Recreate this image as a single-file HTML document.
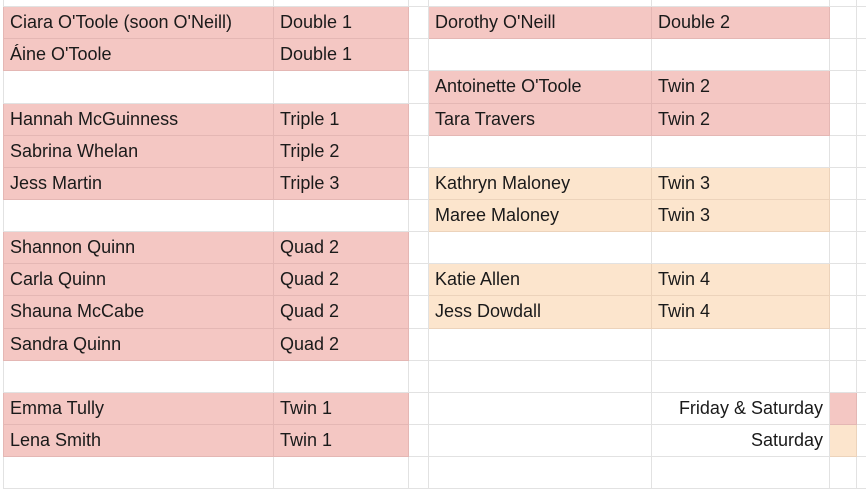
<!DOCTYPE html>
<html><head><meta charset="utf-8"><style>
html,body{margin:0;padding:0;width:866px;height:465px;overflow:hidden;background:#fff}
table{position:absolute;left:3px;top:-26px;width:873px;border-collapse:collapse;table-layout:fixed;font-family:"Liberation Sans",Arial,sans-serif;font-size:18px;color:#1a1a1a}
td{height:31.15px;border:1px solid #e2e2e2;padding:0 0 0 6px;white-space:nowrap;overflow:hidden;vertical-align:middle}
td.p{background:#f4c7c3;border-color:#e4b7b4}
td.o{background:#fce5cd;border-color:#ecd3bb}
td.r{text-align:right;padding:0 6px 0 0}
</style></head><body>
<table>
<colgroup><col style="width:270px"><col style="width:135px"><col style="width:20px"><col style="width:223px"><col style="width:178px"><col style="width:27px"><col style="width:20px"></colgroup>
<tr><td></td><td></td><td></td><td></td><td></td><td></td><td></td></tr>
<tr><td class="p">Ciara O'Toole (soon O'Neill)</td><td class="p">Double 1</td><td></td><td class="p">Dorothy O'Neill</td><td class="p">Double 2</td><td></td><td></td></tr>
<tr><td class="p">Áine O'Toole</td><td class="p">Double 1</td><td></td><td></td><td></td><td></td><td></td></tr>
<tr><td></td><td></td><td></td><td class="p">Antoinette O'Toole</td><td class="p">Twin 2</td><td></td><td></td></tr>
<tr><td class="p">Hannah McGuinness</td><td class="p">Triple 1</td><td></td><td class="p">Tara Travers</td><td class="p">Twin 2</td><td></td><td></td></tr>
<tr><td class="p">Sabrina Whelan</td><td class="p">Triple 2</td><td></td><td></td><td></td><td></td><td></td></tr>
<tr><td class="p">Jess Martin</td><td class="p">Triple 3</td><td></td><td class="o">Kathryn Maloney</td><td class="o">Twin 3</td><td></td><td></td></tr>
<tr><td></td><td></td><td></td><td class="o">Maree Maloney</td><td class="o">Twin 3</td><td></td><td></td></tr>
<tr><td class="p">Shannon Quinn</td><td class="p">Quad 2</td><td></td><td></td><td></td><td></td><td></td></tr>
<tr><td class="p">Carla Quinn</td><td class="p">Quad 2</td><td></td><td class="o">Katie Allen</td><td class="o">Twin 4</td><td></td><td></td></tr>
<tr><td class="p">Shauna McCabe</td><td class="p">Quad 2</td><td></td><td class="o">Jess Dowdall</td><td class="o">Twin 4</td><td></td><td></td></tr>
<tr><td class="p">Sandra Quinn</td><td class="p">Quad 2</td><td></td><td></td><td></td><td></td><td></td></tr>
<tr><td></td><td></td><td></td><td></td><td></td><td></td><td></td></tr>
<tr><td class="p">Emma Tully</td><td class="p">Twin 1</td><td></td><td></td><td class="r">Friday &amp; Saturday</td><td class="p"></td><td></td></tr>
<tr><td class="p">Lena Smith</td><td class="p">Twin 1</td><td></td><td></td><td class="r">Saturday</td><td class="o"></td><td></td></tr>
<tr><td></td><td></td><td></td><td></td><td></td><td></td><td></td></tr>
</table>
</body></html>
